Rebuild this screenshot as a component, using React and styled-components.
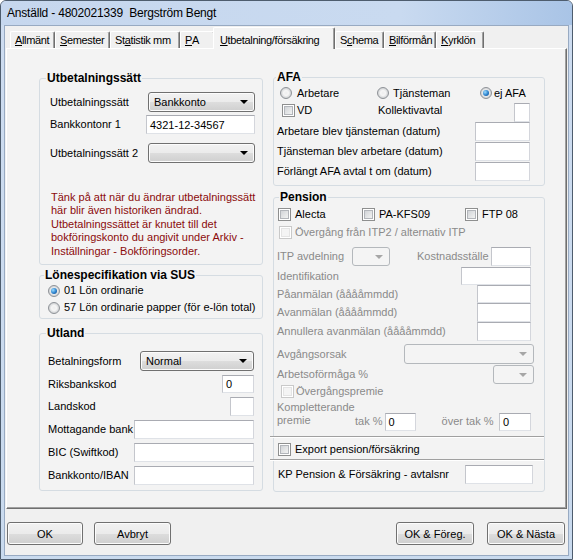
import styled, { createGlobalStyle } from "styled-components";

const GlobalStyle = createGlobalStyle`
  html, body {
    margin: 0;
    padding: 0;
    background: #fff;
  }
  body {
    font-family: "Liberation Sans", Arial, sans-serif;
    font-size: 11px;
    color: #000;
  }
`;

const tabs = [
  { pre: "", key: "A", post: "llmänt", w: 45 },
  { pre: "", key: "S", post: "emester", w: 55 },
  { pre: "St", key: "a", post: "tistik mm", w: 70 },
  { pre: "", key: "P", post: "A", w: 35 },
  { pre: "", key: "U", post: "tbetalning/försäkring", w: 122, active: true },
  { pre: "S", key: "c", post: "hema", w: 49 },
  { pre: "", key: "B", post: "ilförmån", w: 52 },
  { pre: "", key: "K", post: "yrklön", w: 48 },
];

const App = () => {
  return (
    <>
      <GlobalStyle />
      <Window>
        <TitleBar>Anställd - 4802021339&nbsp; Bergström Bengt</TitleBar>
        <Client>
          <TabStrip>
            {tabs.map((t) => (
              <Tab key={t.post} $w={t.w} $active={t.active}>
                {t.pre}
                <u>{t.key}</u>
                {t.post}
              </Tab>
            ))}
          </TabStrip>

          <Panel>
            <Column $w={224} $mt={1}>
              <Group>
                <Legend $ml={6}>Utbetalningssätt</Legend>
                <Row $h={20} $mt={7} $pl={10} $pr={7}>
                  <Label>Utbetalningssätt</Label>
                  <Select $w={107}>Bankkonto</Select>
                </Row>
                <Row $h={19} $mt={3} $pl={10} $pr={7}>
                  <Label>Bankkontonr 1</Label>
                  <Field $w={109}>4321-12-34567</Field>
                </Row>
                <Row $h={20} $mt={9} $pl={10} $pr={7}>
                  <Label>Utbetalningssätt 2</Label>
                  <Select $w={107} />
                </Row>
                <Notice>
                  Tänk på att när du ändrar utbetalningssätt
                  <br />
                  här blir även historiken ändrad.
                  <br />
                  Utbetalningssättet är knutet till det
                  <br />
                  bokföringskonto du angivit under Arkiv -
                  <br />
                  Inställningar - Bokföringsorder.
                </Notice>
              </Group>

              <Group $mt={3} $pb={2}>
                <Legend $ml={4}>Lönespecifikation via SUS</Legend>
                <Row $h={17} $pl={8}>
                  <Radio $on />
                  <Label $gap={4}>01 Lön ordinarie</Label>
                </Row>
                <Row $h={17} $pl={8}>
                  <Radio />
                  <Label $gap={4}>57 Lön ordinarie papper (för e-lön total)</Label>
                </Row>
              </Group>

              <Group $mt={7} $pb={5}>
                <Legend $ml={6}>Utland</Legend>
                <Row $h={20} $mt={11} $pl={8} $pr={8}>
                  <Label>Betalningsform</Label>
                  <Select $w={114}>Normal</Select>
                </Row>
                <Row $h={18} $mt={4} $pl={8} $pr={8}>
                  <Label>Riksbankskod</Label>
                  <Field $w={32}>0</Field>
                </Row>
                <Row $h={19} $mt={4} $pl={8} $pr={8}>
                  <Label>Landskod</Label>
                  <Field $w={24} />
                </Row>
                <Row $h={19} $mt={4} $pl={8} $pr={8}>
                  <Label>Mottagande bank</Label>
                  <Field $w={120} />
                </Row>
                <Row $h={19} $mt={4} $pl={8} $pr={8}>
                  <Label>BIC (Swiftkod)</Label>
                  <Field $w={120} />
                </Row>
                <Row $h={19} $mt={4} $pl={8} $pr={8}>
                  <Label>Bankkonto/IBAN</Label>
                  <Field $w={120} />
                </Row>
              </Group>
            </Column>

            <Column $w={272}>
              <Group $pb={4}>
                <Legend $ml={2}>AFA</Legend>
                <Row $h={16} $mt={1} $pl={6}>
                  <Cell $w={97}>
                    <Radio />
                    <Label $gap={5}>Arbetare</Label>
                  </Cell>
                  <Cell $w={103}>
                    <Radio />
                    <Label $gap={4}>Tjänsteman</Label>
                  </Cell>
                  <Cell>
                    <Radio $on />
                    <Label $gap={2}>ej AFA</Label>
                  </Cell>
                </Row>
                <Row $h={19} $mt={2} $pl={8} $pr={14} $top>
                  <Cell $w={96} $mt={1}>
                    <Check />
                    <Label $gap={2}>VD</Label>
                  </Cell>
                  <Label $mt={1}>Kollektivavtal</Label>
                  <Field $w={16} />
                </Row>
                <Row $h={19} $pl={3} $pr={14}>
                  <Label>Arbetare blev tjänsteman (datum)</Label>
                  <Field $w={55} />
                </Row>
                <Row $h={19} $mt={1} $pl={3} $pr={14}>
                  <Label>Tjänsteman blev arbetare (datum)</Label>
                  <Field $w={55} />
                </Row>
                <Row $h={19} $mt={1} $pl={3} $pr={14}>
                  <Label>Förlängt AFA avtal t om (datum)</Label>
                  <Field $w={55} />
                </Row>
              </Group>

              <Group $mt={4} $pb={7}>
                <Legend $ml={5}>Pension</Legend>
                <Row $h={14} $mt={3} $pl={4}>
                  <Cell $w={84}>
                    <Check />
                    <Label $gap={4}>Alecta</Label>
                  </Cell>
                  <Cell $w={103}>
                    <Check />
                    <Label $gap={4}>PA-KFS09</Label>
                  </Cell>
                  <Cell>
                    <Check />
                    <Label $gap={4}>FTP 08</Label>
                  </Cell>
                </Row>
                <Row $h={14} $mt={4} $pl={5}>
                  <Check $dis />
                  <Label $gap={3} $dis>
                    Övergång från ITP2 / alternativ ITP
                  </Label>
                </Row>
                <Row $h={19} $mt={8} $pl={3} $pr={13}>
                  <Label $dis $w={75}>
                    ITP avdelning
                  </Label>
                  <Select $w={38} $h={19} $dis $inline />
                  <Label $dis $gap={27}>
                    Kostnadsställe
                  </Label>
                  <Field $w={40} />
                </Row>
                <Row $h={18} $mt={1} $pl={3} $pr={13}>
                  <Label $dis>Identifikation</Label>
                  <Field $w={70} />
                </Row>
                <Row $h={18} $pl={3} $pr={13}>
                  <Label $dis>Påanmälan (ååååmmdd)</Label>
                  <Field $w={54} />
                </Row>
                <Row $h={19} $pl={3} $pr={13}>
                  <Label $dis>Avanmälan (ååååmmdd)</Label>
                  <Field $w={54} />
                </Row>
                <Row $h={19} $pl={3} $pr={13}>
                  <Label $dis>Annullera avanmälan (ååååmmdd)</Label>
                  <Field $w={54} />
                </Row>
                <Row $h={20} $mt={3} $pl={3} $pr={10}>
                  <Label $dis>Avgångsorsak</Label>
                  <Select $w={130} $dis />
                </Row>
                <Row $h={19} $mt={1} $pl={3} $pr={10}>
                  <Label $dis>Arbetsoförmåga %</Label>
                  <Select $w={41} $h={19} $dis />
                </Row>
                <Row $h={13} $mt={1} $pl={7}>
                  <Check $dis />
                  <Label $gap={2} $dis>
                    Övergångspremie
                  </Label>
                </Row>
                <Row $h={30} $mt={3} $pl={3} $pr={13} $bottom>
                  <PremieLabel>
                    Kompletterande
                    <br />
                    premie
                  </PremieLabel>
                  <Label $dis $mb={3}>
                    tak %
                  </Label>
                  <Field $w={31} $h={18} $inline $ml={2}>
                    0
                  </Field>
                  <Label $dis $mb={3} $gap={26}>
                    över tak %
                  </Label>
                  <Field $w={32} $h={18}>
                    0
                  </Field>
                </Row>
                <Separator $mt={5} />
                <Row $h={14} $mt={4} $pl={4}>
                  <Check />
                  <Label $gap={4}>Export pension/försäkring</Label>
                </Row>
                <Separator $mt={3} />
                <Row $h={19} $mt={4} $pl={4} $pr={11}>
                  <Label>KP Pension &amp; Försäkring - avtalsnr</Label>
                  <Field $w={68} />
                </Row>
              </Group>
            </Column>
          </Panel>

          <ButtonBar>
            <ButtonGroup>
              <Button $w={76}>OK</Button>
              <Button $w={77}>Avbryt</Button>
            </ButtonGroup>
            <ButtonGroup $gap={13}>
              <Button $w={78}>OK &amp; Föreg.</Button>
              <Button $w={78}>OK &amp; Nästa</Button>
            </ButtonGroup>
          </ButtonBar>
        </Client>
      </Window>
    </>
  );
};

const Window = styled.div`
  width: 573px;
  height: 560px;
  box-sizing: border-box;
  border: 1px solid #4e5d6e;
  border-radius: 6px 6px 0 0;
  background: linear-gradient(to bottom, #bfd2eb 0px, #cddcf0 26px, #c9daee 100%);
  display: flex;
  flex-direction: column;
  overflow: hidden;
`;

const TitleBar = styled.div`
  height: 24px;
  flex: none;
  display: flex;
  align-items: center;
  padding-left: 6px;
  font-size: 12px;
  letter-spacing: -0.2px;
  color: #000;
  background: linear-gradient(to right, #c6d7ee 0%, #c9daf0 70%, #a9c4e6 100%);
`;

const Client = styled.div`
  flex: 1;
  margin: 0 3px 3px 3px;
  border: 1px solid #98aac2;
  background: #f0f0f0;
  display: flex;
  flex-direction: column;
`;

const TabStrip = styled.div`
  height: 21px;
  margin-top: 1px;
  padding-left: 5px;
  display: flex;
  align-items: flex-end;
  flex: none;
`;

const Tab = styled.div`
  width: ${(p) => p.$w}px;
  height: ${(p) => (p.$active ? 22 : 17)}px;
  box-sizing: border-box;
  flex: none;
  display: flex;
  align-items: center;
  padding: ${(p) => (p.$active ? "2px 0 0 6px" : "0 0 0 4px")};
  margin-left: ${(p) => (p.$active ? -2 : 0)}px;
  margin-bottom: ${(p) => (p.$active ? -1 : 0)}px;
  border-top: 1px solid #fff;
  border-left: 1px solid #fff;
  border-right: 1px solid #6f6f6f;
  box-shadow: inset -1px 0 0 #a0a0a0;
  border-radius: 2px 2px 0 0;
  background: ${(p) => (p.$active ? "#f3f3f3" : "#f0f0f0")};
  position: relative;
  z-index: ${(p) => (p.$active ? 2 : 1)};
  white-space: nowrap;
  overflow: hidden;
  font-size: 11px;
  letter-spacing: -0.35px;
`;

const Panel = styled.div`
  height: 461px;
  box-sizing: border-box;
  margin: 0 1px;
  flex: none;
  border-top: 1px solid #fff;
  border-left: 1px solid #fff;
  border-right: 1px solid #6f6f6f;
  border-bottom: 1px solid #6f6f6f;
  box-shadow: inset -1px -1px 0 #a0a0a0;
  background: #f3f3f3;
  display: flex;
  gap: 10px;
  padding: 21px 0 0 32px;
`;

const Column = styled.div`
  width: ${(p) => p.$w}px;
  margin-top: ${(p) => p.$mt || 0}px;
  display: flex;
  flex-direction: column;
`;

const Group = styled.fieldset`
  margin: ${(p) => p.$mt || 0}px 0 0 0;
  padding: 0 0 ${(p) => p.$pb || 0}px 0;
  min-width: 0;
  border: 1px solid #d5dce2;
  border-radius: 3px;
  display: flex;
  flex-direction: column;
`;

const Legend = styled.legend`
  margin-left: ${(p) => p.$ml}px;
  padding: 0 1px;
  font-size: 12px;
  font-weight: bold;
  line-height: 14px;
`;

const Row = styled.div`
  height: ${(p) => p.$h}px;
  margin-top: ${(p) => p.$mt || 0}px;
  padding-left: ${(p) => p.$pl || 0}px;
  padding-right: ${(p) => p.$pr || 0}px;
  display: flex;
  align-items: ${(p) => (p.$top ? "flex-start" : p.$bottom ? "flex-end" : "center")};
  flex: none;
`;

const Cell = styled.div`
  width: ${(p) => (p.$w ? `${p.$w}px` : "auto")};
  margin-top: ${(p) => p.$mt || 0}px;
  display: flex;
  align-items: center;
  flex: none;
`;

const Label = styled.span`
  width: ${(p) => (p.$w ? `${p.$w}px` : "auto")};
  margin-left: ${(p) => p.$gap || 0}px;
  margin-top: ${(p) => p.$mt || 0}px;
  margin-bottom: ${(p) => p.$mb || 0}px;
  line-height: 13px;
  white-space: nowrap;
  color: ${(p) => (p.$dis ? "#8a8a8a" : "#000")};
  flex: none;
`;

const PremieLabel = styled.div`
  width: 78px;
  line-height: 13px;
  color: #8a8a8a;
  align-self: flex-start;
  flex: none;
`;

const Field = styled.div`
  width: ${(p) => p.$w}px;
  height: ${(p) => (p.$h ? `${p.$h}px` : "100%")};
  box-sizing: border-box;
  margin-left: ${(p) => (p.$inline ? `${p.$ml || 0}px` : "auto")};
  border: 1px solid;
  border-color: #a9abb2 #d4d6dc #dfe2e7 #c4c6cc;
  background: #fff;
  display: flex;
  align-items: center;
  padding: 0 3px;
  white-space: nowrap;
  flex: none;
`;

const Select = styled.div`
  width: ${(p) => p.$w}px;
  height: ${(p) => p.$h || 20}px;
  box-sizing: border-box;
  margin-left: ${(p) => (p.$inline ? "0" : "auto")};
  border: 1px solid ${(p) => (p.$dis ? "#b4b8bc" : "#707070")};
  border-radius: 3px;
  background: ${(p) =>
    p.$dis
      ? "#f4f4f4"
      : "linear-gradient(to bottom, #f2f2f2 0%, #ebebeb 50%, #dddddd 51%, #cfcfcf 100%)"};
  box-shadow: inset 0 0 0 1px ${(p) => (p.$dis ? "#f4f4f4" : "#fcfcfc")};
  display: flex;
  align-items: center;
  padding: 0 6px 0 5px;
  font-size: 11px;
  flex: none;

  &::after {
    content: "";
    margin-left: auto;
    border-left: 4px solid transparent;
    border-right: 4px solid transparent;
    border-top: 4px solid ${(p) => (p.$dis ? "#a6a6a6" : "#000")};
  }
`;

const Radio = styled.span`
  width: 12px;
  height: 12px;
  box-sizing: border-box;
  border-radius: 50%;
  border: 1px solid #8e9297;
  background: radial-gradient(circle at 50% 50%, #eeeeee 0%, #f6f6f6 35%, #d2d4d6 70%, #e8e8e8 100%);
  display: inline-flex;
  align-items: center;
  justify-content: center;
  flex: none;

  &::after {
    content: "";
    width: 6px;
    height: 6px;
    border-radius: 50%;
    background: ${(p) =>
      p.$on ? "radial-gradient(circle at 35% 35%, #9adcff 0%, #2a80cc 55%, #0d3f7a 100%)" : "transparent"};
  }
`;

const Check = styled.span`
  width: 13px;
  height: 13px;
  box-sizing: border-box;
  border: 1px solid ${(p) => (p.$dis ? "#c9c9c9" : "#8e8f8f")};
  background: ${(p) => (p.$dis ? "#f4f4f4" : "linear-gradient(135deg, #c8cbd0 0%, #eceded 70%, #f7f7f7 100%)")};
  box-shadow: inset 0 0 0 1px #fff, inset 0 0 0 2px ${(p) => (p.$dis ? "#e4e4e4" : "#b2b5ba")};
  flex: none;
`;

const Notice = styled.div`
  margin-top: 28px;
  padding: 0 0 6px 11px;
  line-height: 13.4px;
  color: #8b0b0b;
  white-space: nowrap;
`;

const Separator = styled.div`
  height: 0;
  margin: ${(p) => p.$mt}px 0 0 -4px;
  border-top: 1px solid #a0a0a0;
  border-bottom: 1px solid #fff;
  flex: none;
`;

const ButtonBar = styled.div`
  margin-top: 13px;
  padding: 0 3px 0 2px;
  display: flex;
  justify-content: space-between;
`;

const ButtonGroup = styled.div`
  display: flex;
  gap: ${(p) => p.$gap || 11}px;
`;

const Button = styled.div`
  width: ${(p) => p.$w}px;
  height: 23px;
  box-sizing: border-box;
  border: 1px solid #707070;
  border-radius: 3px;
  background: linear-gradient(to bottom, #f2f2f2 0%, #ebebeb 50%, #dddddd 51%, #cfcfcf 100%);
  box-shadow: inset 0 0 0 1px #fcfcfc;
  display: flex;
  align-items: center;
  justify-content: center;
  font-size: 11px;
`;

export default App;
